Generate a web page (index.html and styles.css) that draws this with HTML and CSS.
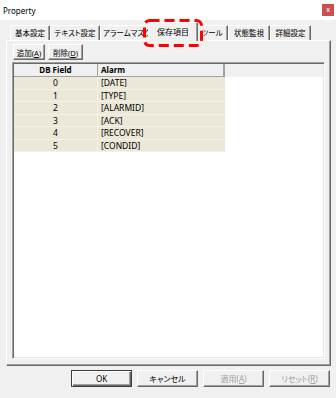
FILE: index.html
```html
<!DOCTYPE html>
<html lang="ja">
<head>
<meta charset="utf-8">
<title>Property</title>
<link rel="stylesheet" href="styles.css">
</head>
<body>
<div class="window">
  <div class="titlebar">
    <span class="title">Property</span>
    <span class="close">x</span>
  </div>
  <div class="tabs">
    <div class="tab t1">基本設定</div>
    <div class="tab t2">テキスト設定</div>
    <div class="tab t3">アラームマスク</div>
    <div class="tab sel">保存項目</div>
    <div class="tab t5">ツール</div>
    <div class="tab t6">状態監視</div>
    <div class="tab t7">詳細設定</div>
  </div>
  <div class="panel">
    <div class="toolbar">
      <button class="tbtn b-add">追加(<u>A</u>)</button>
      <button class="tbtn b-del">削除(<u>D</u>)</button>
    </div>
    <div class="listbox">
      <div class="lv-header">
        <div class="hcol c1">DB Field</div>
        <div class="hcol c2">Alarm</div>
        <div class="hfill"></div>
      </div>
      <div class="row"><div class="cell c1">0</div><div class="cell c2">[DATE]</div></div>
      <div class="row"><div class="cell c1">1</div><div class="cell c2">[TYPE]</div></div>
      <div class="row"><div class="cell c1">2</div><div class="cell c2">[ALARMID]</div></div>
      <div class="row"><div class="cell c1">3</div><div class="cell c2">[ACK]</div></div>
      <div class="row"><div class="cell c1">4</div><div class="cell c2">[RECOVER]</div></div>
      <div class="row"><div class="cell c1">5</div><div class="cell c2">[CONDID]</div></div>
    </div>
  </div>
  <div class="footer">
    <button class="btn default">OK</button>
    <button class="btn">キャンセル</button>
    <button class="btn disabled">適用(<u>A</u>)</button>
    <button class="btn disabled">リセット(<u>R</u>)</button>
  </div>
  <svg class="annot" width="60" height="28" viewBox="0 0 60 28">
    <rect x="1.5" y="1.5" width="57" height="25" rx="5" ry="5" fill="none" stroke="#ff0000" stroke-width="3" stroke-dasharray="10 5"/>
  </svg>
</div>
</body>
</html>
```
FILE: styles.css
```css
html, body {
  margin: 0;
  padding: 0;
  background: #f0f0f0;
}
body {
  font-family: "Noto Sans", "Noto Sans CJK JP", sans-serif;
  font-size: 8px;
  color: #000;
  font-feature-settings: "palt";
}
.window {
  position: relative;
  width: 336px;
  height: 398px;
  background: #f0f0f0;
  display: flex;
  flex-direction: column;
  overflow: hidden;
}
.titlebar {
  height: 20px;
  flex: none;
  background: #fff;
  display: flex;
  align-items: center;
  justify-content: space-between;
  padding: 0 2px 0 3px;
}
.title {
  font-size: 8px;
}
.close {
  width: 12px;
  height: 12px;
  background: #c75050;
  color: #fff;
  font-size: 7px;
  line-height: 11px;
  text-align: center;
}
.tabs {
  flex: none;
  position: relative;
  z-index: 1;
  display: flex;
  align-items: flex-end;
  height: 18px;
  margin-top: 2px;
  padding-left: 10px;
}
.tab {
  flex: none;
  box-sizing: border-box;
  height: 15px;
  border-top: 1px solid #fff;
  border-left: 1px solid #fff;
  border-right: 1px solid #696969;
  box-shadow: inset -1px 0 #a0a0a0;
  border-radius: 1px 1px 0 0;
  background: #f0f0f0;
  font-size: 7.5px;
  line-height: 14px;
  white-space: nowrap;
  overflow: hidden;
  text-align: center;
}
.t1 { width: 40px; }
.t2 { width: 50px; }
.t3 { width: 50px; text-align: left; padding-left: 2px; }
.t5 { width: 32px; }
.t6 { width: 42px; }
.t7 { width: 41px; }
.tab.sel {
  position: relative;
  z-index: 2;
  width: 50px;
  height: 19px;
  margin: 0 -2px -1px -2px;
  line-height: 18px;
  font-size: 8px;
}
.panel {
  flex: none;
  box-sizing: border-box;
  height: 326px;
  margin: 0 5px 0 6px;
  border-top: 1px solid #fff;
  border-left: 1px solid #fff;
  border-right: 1px solid #696969;
  border-bottom: 1px solid #696969;
  box-shadow: inset -1px -1px #a0a0a0;
  padding: 3px 5px 6px 5px;
  display: flex;
  flex-direction: column;
  gap: 2px;
}
.toolbar {
  flex: none;
  display: flex;
  gap: 3px;
  height: 16px;
  padding-left: 1px;
}
.tbtn {
  box-sizing: border-box;
  height: 16px;
  margin: 0;
  padding: 0;
  border: 1px solid;
  border-color: #fff #696969 #696969 #fff;
  box-shadow: inset -1px -1px #a0a0a0;
  background: #f0f0f0;
  font-family: "Noto Sans", "Noto Sans CJK JP", sans-serif;
  font-feature-settings: "palt";
  font-size: 7.5px;
  color: #000;
}
.b-add { width: 32px; }
.b-del { width: 35px; }
.listbox {
  flex: 1;
  box-sizing: border-box;
  background: #fff;
  border: 1px solid;
  border-color: #a0a0a0 #fff #fff #a0a0a0;
  box-shadow: inset 1px 1px #696969, inset -1px -1px #e3e3e3;
  padding: 1px 1px 0 1px;
  overflow: hidden;
}
.lv-header {
  display: flex;
  height: 13px;
  background: #f0f0f0;
}
.hcol {
  box-sizing: border-box;
  height: 13px;
  line-height: 12px;
  font-weight: bold;
  border-bottom: 1px solid #a0a0a0;
  border-right: 1px solid #a0a0a0;
  white-space: nowrap;
}
.hcol.c2 {
  border-right: 2px solid #a0a0a0;
}
.hfill {
  flex: 1;
  height: 13px;
  background: #f0f0f0;
}
.c1 {
  width: 84px;
  text-align: center;
}
.c2 {
  width: 127px;
  padding-left: 3px;
  text-align: left;
}
.row {
  display: flex;
  width: 211px;
  height: 12.5px;
  box-sizing: border-box;
  background: #ebe8d8;
  border-bottom: 1px solid #f3f1e8;
}
.cell {
  box-sizing: border-box;
  font-size: 8.5px;
  line-height: 11.5px;
  white-space: nowrap;
}
.cell.c1 {
  border-right: 1px solid #f3f1e8;
}
.footer {
  flex: none;
  display: flex;
  justify-content: flex-end;
  gap: 5px;
  padding: 4px 6px 0 0;
}
.btn {
  box-sizing: border-box;
  width: 61px;
  height: 17px;
  margin: 0;
  padding: 0;
  border: 1px solid;
  border-color: #fff #696969 #696969 #fff;
  box-shadow: inset -1px -1px #a0a0a0;
  background: #f0f0f0;
  font-family: "Noto Sans", "Noto Sans CJK JP", sans-serif;
  font-feature-settings: "palt";
  font-size: 8px;
  color: #000;
}
.btn.default {
  border: 1px solid #3c3c3c;
  box-shadow: inset 1px 1px #fff, inset -1px -1px #696969, inset -2px -2px #a0a0a0;
}
.btn.disabled {
  color: #a0a0a0;
}
.annot {
  position: absolute;
  left: 143px;
  top: 19px;
  z-index: 5;
}
```
